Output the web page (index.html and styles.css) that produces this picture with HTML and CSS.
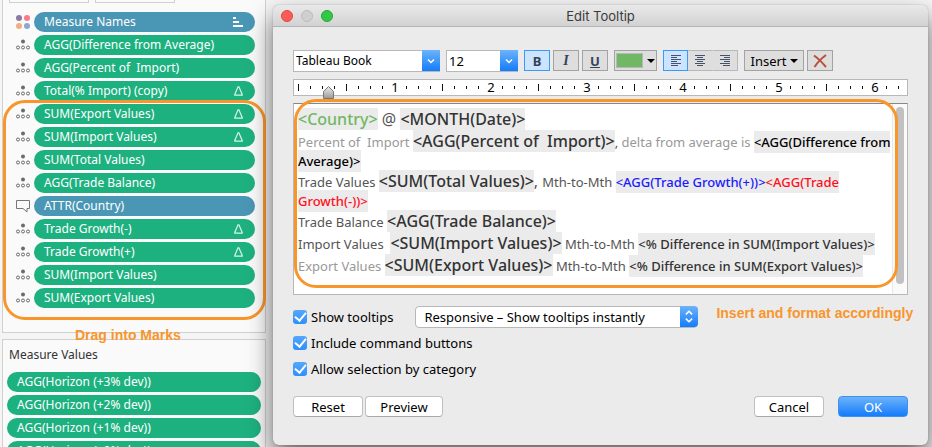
FILE: index.html
```
<!DOCTYPE html>
<html lang="en">
<head>
<meta charset="utf-8">
<title>Edit Tooltip</title>
<link rel="stylesheet" href="styles.css">
</head>
<body>
<svg class="defs" aria-hidden="true">
  <symbol id="detail" viewBox="0 0 14 11"><circle cx="7" cy="2" r="2" fill="#6b6b6b"/><g fill="none" stroke="#6b6b6b"><circle cx="2" cy="8" r="1.5"/><circle cx="7" cy="8" r="1.5"/><circle cx="12" cy="8" r="1.5"/></g></symbol>
  <symbol id="delta" viewBox="0 0 9 10"><path d="M.8 9.2V8.4L4 .8h.9L8.200 8.400v.8z" fill="none" stroke="#d5f3e7" stroke-width="1.200"/></symbol>
  <symbol id="chevron" viewBox="0 0 18 20"><path d="M6 9l3 3 3-3" fill="none" stroke="#fff" stroke-width="1.500"/></symbol>
</svg>
<div class="layout">
  <aside class="sidebar">
    <section class="panel marks">
      <div class="cards"><span></span><span></span></div>
      <ul class="pills">
        <li><svg class="icon" viewBox="0 0 14 14"><circle cx="3" cy="3" r="3" fill="#8d7aa0"/><circle cx="11" cy="3" r="3" fill="#fa7a87"/><circle cx="3" cy="11" r="3" fill="#f4ad82"/><circle cx="11" cy="11" r="3" fill="#8ba9d0"/></svg><span class="pill blue">Measure Names<svg class="sort" viewBox="0 0 10 10"><path d="M0 1h3M0 5h6M0 9h10" stroke="#fff" stroke-width="2"/></svg></span></li>
        <li><svg class="icon"><use href="#detail"/></svg><span class="pill">AGG(Difference from Average)</span></li>
        <li><svg class="icon"><use href="#detail"/></svg><span class="pill">AGG(Percent of&nbsp; Import)</span></li>
        <li><svg class="icon"><use href="#detail"/></svg><span class="pill">Total(% Import) (copy)<svg class="delta"><use href="#delta"/></svg></span></li>
        <li><svg class="icon"><use href="#detail"/></svg><span class="pill">SUM(Export Values)<svg class="delta"><use href="#delta"/></svg></span></li>
        <li><svg class="icon"><use href="#detail"/></svg><span class="pill">SUM(Import Values)<svg class="delta"><use href="#delta"/></svg></span></li>
        <li><svg class="icon"><use href="#detail"/></svg><span class="pill">SUM(Total Values)</span></li>
        <li><svg class="icon"><use href="#detail"/></svg><span class="pill">AGG(Trade Balance)</span></li>
        <li><svg class="icon" viewBox="0 0 14 14"><path d="M.5 1.500h13v8H11v3.500L7 9.500H.5z" fill="none" stroke="#777"/></svg><span class="pill blue">ATTR(Country)</span></li>
        <li><svg class="icon"><use href="#detail"/></svg><span class="pill">Trade Growth(-)<svg class="delta"><use href="#delta"/></svg></span></li>
        <li><svg class="icon"><use href="#detail"/></svg><span class="pill">Trade Growth(+)<svg class="delta"><use href="#delta"/></svg></span></li>
        <li><svg class="icon"><use href="#detail"/></svg><span class="pill">SUM(Import Values)</span></li>
        <li><svg class="icon"><use href="#detail"/></svg><span class="pill">SUM(Export Values)</span></li>
      </ul>
    </section>
    <section class="panel values">
      <h2>Measure Values</h2>
      <ul class="pills">
        <li><span class="pill">AGG(Horizon (+3% dev))</span></li>
        <li><span class="pill">AGG(Horizon (+2% dev))</span></li>
        <li><span class="pill">AGG(Horizon (+1% dev))</span></li>
        <li><span class="pill">AGG(Horizon (+0% dev))</span></li>
      </ul>
    </section>
    <div class="ring marks-ring"></div>
    <p class="note marks-note">Drag into Marks</p>
  </aside>

  <main class="dialog">
    <header class="titlebar">
      <span class="lights"><i class="close"></i><i class="minimise"></i><i class="expand"></i></span>
      <h1>Edit Tooltip</h1>
    </header>
    <div class="content">
      <div class="toolbar">
        <span class="combo family"><select aria-label="Font"><option>Tableau Book</option></select><svg class="arrow"><use href="#chevron"/></svg></span>
        <span class="combo size"><select aria-label="Font size"><option>12</option></select><svg class="arrow"><use href="#chevron"/></svg></span>
        <div class="styles">
          <button class="tool bold on" aria-label="Bold">B</button>
          <button class="tool italic" aria-label="Italic">I</button>
          <button class="tool underline" aria-label="Underline">U</button>
        </div>
        <button class="tool color" aria-label="Text color"><span class="swatch"></span><span class="caret"></span></button>
        <div class="aligns">
          <button class="tool on" aria-label="Align left"><svg viewBox="0 0 12 11"><path d="M1 .5h10M1 2.500h6M1 4.500h10M1 6.500h6M1 8.500h10M1 10.500h7" stroke="#44536b"/></svg></button>
          <button class="tool" aria-label="Align center"><svg viewBox="0 0 12 11"><path d="M1 .5h10M3 2.500h6M1 4.500h10M3 6.500h6M1 8.500h10M3 10.500h6" stroke="#44536b"/></svg></button>
          <button class="tool" aria-label="Align right"><svg viewBox="0 0 12 11"><path d="M1 .5h10M5 2.500h6M1 4.500h10M5 6.500h6M1 8.500h10M4 10.500h7" stroke="#44536b"/></svg></button>
        </div>
        <div class="actions">
          <button class="tool insert">Insert<span class="caret"></span></button>
          <button class="tool" aria-label="Clear"><svg class="cross" viewBox="0 0 14 14"><path d="M1 1.500C4 3.500 10 9.500 13 13M13 1C9 4 4 9 1.500 13" fill="none" stroke="#b5533c" stroke-width="2"/></svg></button>
        </div>
      </div>
      <div class="ruler">
        <svg class="scale" viewBox="0 0 613 15">
          <defs><pattern id="ticks" x="4" width="96" height="15" patternUnits="userSpaceOnUse"><path d="M12.500 6v3M24.500 6v3M36.500 6v3M60.500 6v3M72.500 6v3M84.500 6v3M48.500 4v7" stroke="#111"/></pattern></defs>
          <path d="M4.500 4v7" stroke="#111"/>
          <rect x="4" width="603" height="15" fill="url(#ticks)"/>
          <g class="inches"><text x="101" y="12">1</text><text x="197" y="12">2</text><text x="293" y="12">3</text><text x="389" y="12">4</text><text x="485" y="12">5</text><text x="581" y="12">6</text></g>
        </svg>
        <svg class="stop" viewBox="0 0 11 13"><defs><linearGradient id="metal" x2="0" y2="1"><stop stop-color="#eee"/><stop offset="1" stop-color="#999"/></linearGradient></defs><path d="M.5 12.500v-7l5-5 5 5v7z" fill="url(#metal)" stroke="#777"/></svg>
      </div>
      <div class="editor">
        <div class="text" role="textbox" aria-multiline="true" aria-label="Tooltip text" contenteditable="true" spellcheck="false">
          <div class="big"><b class="green">&lt;Country&gt;</b> @ <b>&lt;MONTH(Date)&gt;</b></div>
          <div><span class="gray">Percent of&nbsp; Import</span> <b class="large">&lt;AGG(Percent of&nbsp; Import)&gt;</b>, <span class="gray">delta from average is</span> <b class="black">&lt;AGG(Difference from<br>Average)&gt;</b></div>
          <div>Trade Values <b class="large">&lt;SUM(Total Values)&gt;</b><span class="comma">, </span>Mth-to-Mth <b class="plus">&lt;AGG(Trade Growth(+))&gt;</b><b class="minus">&lt;AGG(Trade<br>Growth(-))&gt;</b></div>
          <div>Trade Balance <b class="large">&lt;AGG(Trade Balance)&gt;</b></div>
          <div>Import Values&nbsp; <b class="large">&lt;SUM(Import Values)&gt;</b> Mth-to-Mth <b>&lt;% Difference in SUM(Import Values)&gt;</b></div>
          <div><span class="gray">Export Values</span> <b class="large">&lt;SUM(Export Values)&gt;</b> Mth-to-Mth <b>&lt;% Difference in SUM(Export Values)&gt;</b></div>
        </div>
        <div class="track"><span></span></div>
        <div class="ring editor-ring"></div>
      </div>
      <div class="options">
        <div class="row"><label><input type="checkbox" checked>Show tooltips</label>
          <span class="combo mode"><select aria-label="Tooltip mode"><option>Responsive – Show tooltips instantly</option></select><svg class="arrow" viewBox="0 0 17 20"><path d="M5.500 8l3-3 3 3M5.500 12l3 3 3-3" fill="none" stroke="#fff" stroke-width="1.500"/></svg></span>
          <p class="note">Insert and format accordingly</p></div>
        <div class="row"><label><input type="checkbox" checked>Include command buttons</label></div>
        <div class="row"><label><input type="checkbox" checked>Allow selection by category</label></div>
      </div>
      <footer class="buttons">
        <button class="push">Reset</button>
        <button class="push wide">Preview</button>
        <button class="push cancel">Cancel</button>
        <button class="push primary">OK</button>
      </footer>
    </div>
  </main>
</div>
</body>
</html>
```
FILE: styles.css
```
* { box-sizing: border-box; }
body {
  margin: 0;
  background: #f5f5f5;
  color: #000;
  font: 13px/20px "Noto Sans", "Open Sans", sans-serif;
}
h1, h2, p, ul { margin: 0; padding: 0; font-weight: 400; }
button, select { margin: 0; padding: 0; font: inherit; color: inherit; }
svg { display: block; }
.defs { position: absolute; width: 0; height: 0; }
.layout {
  display: grid;
  grid-template-columns: 266px minmax(0, 1fr);
  align-items: start;
  height: 100vh;
  overflow: hidden;
}

/* Shelves */
.sidebar { position: relative; padding-left: 2px; font-size: 12px; }
.panel { border: 1px solid #d0d0d0; background: #fafafa; }
.marks { border-top: 0; padding: 0 10px 24px 6px; }
.cards { display: flex; gap: 6px; margin-bottom: 9px; }
.cards span { flex: 0 0 80px; height: 3px; border: 1px solid #d0d0d0; border-top: 0; }
.pills { display: grid; gap: 3px; list-style: none; }
.pills li { display: flex; align-items: center; }
.marks .pills { padding-left: 7px; }
.icon { flex: none; width: 14px; height: 14px; margin-right: 4px; }
.pill {
  display: flex;
  flex: 1;
  align-items: center;
  justify-content: space-between;
  height: 20px;
  padding: 0 12px 0 10px;
  border-radius: 10px;
  background: #1eb180;
  color: #fff;
  white-space: nowrap;
}
.pill.blue { background: #4a96b5; }
.delta { width: 9px; height: 10px; }
.sort { width: 10px; height: 10px; }
.values { margin-top: 6px; padding: 5px 4px; }
.values h2 { margin: 0 2px 7px; color: #333; font-size: 12px; }
.ring { position: absolute; border: 3px solid #f8962c; border-radius: 22px; pointer-events: none; }
.marks-ring { inset: 100px 0 auto 3px; height: 220px; }
.note { color: #f8962c; font: bold 14px/20px "Liberation Sans", Arial, sans-serif; white-space: nowrap; }
.marks-note { position: absolute; top: 325px; left: 75px; }

/* Dialog window */
.dialog {
  position: relative;
  margin: 5px 4px 0 7px;
  border-radius: 6px;
  background: #ebebeb;
  box-shadow: 0 0 1px #666, 0 12px 24px rgba(0, 0, 0, .6);
}
.titlebar {
  display: grid;
  grid-template-columns: 1fr auto 1fr;
  align-items: center;
  height: 22px;
  padding: 0 8px;
  border-bottom: 1px solid #b4b4b4;
  border-radius: 6px 6px 0 0;
  background: linear-gradient(#e9e9e9, #d2d2d2);
}
.titlebar h1 { font: 13px/20px Inter, Roboto, sans-serif; color: #3a3a3a; }
.lights { display: flex; gap: 8px; }
.lights i { width: 12px; height: 12px; border: 1px solid #e2463f; border-radius: 50%; background: #fc5b57; }
.lights .minimise { border-color: #bcbcbc; background: #cfcfcf; }
.lights .expand { border-color: #24a835; background: #33c748; }
.content { padding: 23px 20px 28px; }

.toolbar { display: flex; gap: 6px; height: 21px; }
.combo { display: grid; flex: none; grid-template-columns: 1fr 18px; height: 21px; }
.combo select {
  grid-area: 1 / 1 / 2 / 3;
  width: 100%;
  padding: 0 2px;
  border: 1px solid #b8b8b8;
  border-radius: 0;
  background: #fff;
  appearance: none;
}
.arrow { grid-area: 1 / 2; width: 18px; height: 21px; background: linear-gradient(#6cb3fa, #147cfb); pointer-events: none; }
.family { width: 147px; font-size: 12px; }
.size { width: 72px; }
.styles, .actions { display: flex; gap: 3px; }
.aligns { display: flex; }
.tool {
  display: flex;
  align-items: center;
  justify-content: center;
  width: 26px;
  height: 21px;
  border: 1px solid #a3a3a3;
  background: #dedede;
}
.aligns .tool { width: 25px; border-color: #b8b8b8; border-left: 0; }
.aligns .tool:nth-child(2) { border-right-color: transparent; }
.tool.on, .aligns .tool.on { border: 1px solid #3b99fc; background: #cce4ff; }
.aligns svg { width: 12px; height: 11px; }
.bold, .italic, .underline { color: #34435a; font-weight: 700; }
.italic { font-family: "Liberation Serif", serif; font-size: 14px; font-style: italic; }
.underline { text-decoration: underline; }
.tool.color { gap: 4px; width: 43px; }
.swatch { width: 27px; height: 15px; border: 1px solid #b8b8b8; background: #70b863; }
.caret { border: 4px solid transparent; border-top-color: #000; border-bottom: 0; }
.tool.insert { gap: 3px; width: 60px; }
.cross { width: 14px; height: 14px; }

.ruler { position: relative; height: 17px; margin-top: 8px; border: 1px solid #b8b8b8; background: #fff; }
.scale { width: 613px; height: 15px; overflow: visible; }
.inches { font-size: 13px; text-anchor: middle; }
.stop { position: absolute; left: 29px; top: 6px; width: 11px; height: 13px; }

.editor { position: relative; display: flex; margin-top: 7px; border: 1px solid #b8b8b8; border-top-color: #888; background: #fff; }
.text { flex: 1; min-width: 0; min-height: 190px; padding: 4px; color: #555; outline: 0; white-space: nowrap; line-height: 18px; }
.text b { padding: 2px 0; background: #ebebeb; color: #333; font-weight: 500; }
.text .big, .text .large { font-size: 16px; line-height: 22px; }
.text .large, .text .big b { padding: 0; }
.text .gray { color: #999; }
.text .green { color: #70b863; }
.text .black { color: #000; }
.text .plus { color: #1a1aff; }
.text .minus { color: #ff0f1c; }
.text .comma { font-size: 16px; }
.track { flex: none; width: 15px; padding: 3px; border-left: 1px solid #e8e8e8; background: #fafafa; }
.track span { display: block; width: 8px; height: 177px; border-radius: 4px; background: #c1c1c1; }
.editor-ring { inset: -5px 9px 6px 0; }

.options { display: grid; grid-template-columns: minmax(0, 1fr); gap: 5px; margin-top: 11px; }
.row { display: flex; align-items: center; height: 21px; }
.row label { display: flex; flex: none; align-items: center; gap: 4px; white-space: nowrap; }
.row input {
  width: 14px;
  height: 14px;
  margin: 0;
  border-radius: 3px;
  appearance: none;
  background: #3b99fc linear-gradient(#55a7fb, #2f8ffc);
  display: grid;
  place-items: center;
}
.row input::before {
  content: "";
  width: 5px;
  height: 9px;
  margin-bottom: 2px;
  border: solid #fff;
  border-width: 0 2px 2px 0;
  transform: rotate(40deg);
}
.mode { width: 283px; margin: 0 18px 0 22px; }
.mode select { padding: 0 8px; border-radius: 4px; }
.mode .arrow { border-radius: 0 4px 4px 0; }
.row .note { margin-bottom: 8px; }
.buttons { display: flex; gap: 2px; margin-top: 17px; }
.push { width: 70px; height: 21px; border: 1px solid #c0c0c0; border-bottom-color: #a8a8a8; border-radius: 4px; background: #fff; line-height: 18px; }
.push.wide { width: 78px; }
.cancel { margin: 0 12px 0 auto; }
.primary { border-color: #3b91f5; background: linear-gradient(#6cb3fa, #147cfb); color: #fff; }
```
